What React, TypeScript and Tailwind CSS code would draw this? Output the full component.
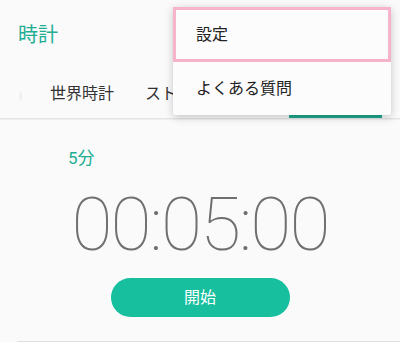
import React from 'react';

export default function App() {
  return (
    <div className="relative w-[400px] h-[342px] overflow-hidden bg-[#fafafa] font-['Roboto','Noto_Sans_CJK_JP',sans-serif]">
      {/* title bar */}
      <div className="h-[70px] flex items-center pl-[18px]">
        <span className="text-[20px] text-[#21ad93]">時計</span>
      </div>

      {/* tabs (partly hidden behind the menu) */}
      <div className="relative h-[49px] flex items-stretch border-b border-[#e4e4e4] shadow-[0_1px_1px_rgba(0,0,0,0.04)]">
        <div className="w-[50px] flex items-center pl-[19px] pt-[4px]">
          <span className="w-[3px] h-[9px] bg-[#f1f1f1] rounded-sm" />
        </div>
        <div className="flex items-center text-[16px] text-[#333]">世界時計</div>
        <div className="ml-[31px] flex items-center text-[16px] text-[#333]">スト</div>
        <div className="ml-[112px] w-[93px] border-b-[3px] border-[#1ea88e]" />
      </div>

      {/* timer */}
      <div className="pl-[68px] pt-[27px] text-[17px] text-[#21ad93] leading-[24px]">5分</div>
      <div className="flex justify-center mt-[14px]">
        <span className="text-[75px] font-thin leading-[80px] text-[#6f6f6f] tracking-[-2px]">00:05:00</span>
      </div>
      <div className="flex justify-center mt-[14px]">
        <button className="w-[179px] h-[39px] rounded-full bg-[#17bf9f] text-white text-[16px]">開始</button>
      </div>
      <div className="absolute left-[17px] right-0 bottom-0 h-px bg-[#e0e0e0]" />

      {/* overflow menu */}
      <div className="absolute left-[173px] top-[7px] w-[218px] bg-[#fcfcfc] shadow-[0_2px_8px_rgba(0,0,0,0.22)] rounded-[2px]">
        <div className="h-[55px] flex items-center pl-[20px] border-[3px] border-[#f6b3cb] text-[16px] text-[#222]">
          設定
        </div>
        <div className="h-[53px] flex items-center pl-[23px] text-[16px] text-[#222]">
          よくある質問
        </div>
      </div>
    </div>
  );
}
